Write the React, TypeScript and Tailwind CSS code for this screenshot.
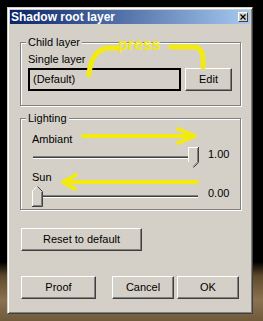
import React from 'react';

const btn =
  "flex items-center justify-center h-[23px] bg-[#d4d0c8] border border-t-white border-l-white border-r-[#404040] border-b-[#404040] shadow-[inset_-1px_-1px_0_#808080] text-[11px] leading-[13px] text-black";

function ThumbDown() {
  return (
    <svg width="11" height="21" viewBox="0 0 11 21" className="absolute right-0 top-[1px]">
      <polygon points="0,0 10,0 10,15 5,20 0,15" fill="#d4d0c8" />
      <polyline points="0.5,15 0.5,0.5 10,0.5" fill="none" stroke="#fff" />
      <polyline points="10.5,0 10.5,15.5 5.5,20.5" fill="none" stroke="#404040" />
      <polyline points="9.5,1 9.5,15 5,19.5" fill="none" stroke="#808080" />
    </svg>
  );
}

function ThumbUp() {
  return (
    <svg width="11" height="21" viewBox="0 0 11 21" className="absolute left-0 top-[1px]">
      <polygon points="0,5 5,0 10,5 10,20 0,20" fill="#d4d0c8" />
      <polyline points="0.5,20 0.5,5 5,0.5" fill="none" stroke="#fff" />
      <polyline points="5.5,0.5 10.5,5.5 10.5,20.5 0,20.5" fill="none" stroke="#404040" />
      <polyline points="9.5,6 9.5,19.5 1,19.5" fill="none" stroke="#808080" />
    </svg>
  );
}

function Slider({ value, atEnd }: { value: string; atEnd: boolean }) {
  return (
    <div className="flex items-center h-[22px]">
      <div className="relative w-[167px] h-full flex items-center">
        <div className="mx-[1px] w-full h-[3px] border-t border-b border-t-[#808080] border-b-white bg-[#404040]" />
        {atEnd ? <ThumbDown /> : <ThumbUp />}
      </div>
      <span className="ml-[9px] mb-[5px]">{value}</span>
    </div>
  );
}

export default function App() {
  return (
    <div className="relative w-[263px] h-[321px] overflow-hidden pt-[7px] pl-[7px] bg-[linear-gradient(to_bottom,#000_0px,#000_262px,#5e4a2c_276px,#8a7250_300px,#6f5a3a_321px)] font-['Liberation_Sans',Arial,sans-serif] text-[11px] leading-[13px] text-black">
      <div className="w-[246px] h-[307px] bg-[#d4d0c8] p-[2px] border border-t-[#d4d0c8] border-l-[#d4d0c8] border-r-[#404040] border-b-[#404040] shadow-[inset_1px_1px_0_#fff,inset_-1px_-1px_0_#808080] flex flex-col">
        {/* title bar */}
        <div className="h-[14px] flex items-center justify-between bg-[linear-gradient(to_right,#0a246a,#a6caf0)] pl-[1px]">
          <span className="text-white font-bold text-[12px] leading-[14px]">Shadow root layer</span>
          <div className="w-[10px] h-[10px] mr-[2px] bg-[#d4d0c8] border border-t-white border-l-white border-r-[#404040] border-b-[#404040] flex items-center justify-center">
            <svg width="6" height="6" viewBox="0 0 6 6">
              <path d="M0.5 0.5 L5.5 5.5 M5.5 0.5 L0.5 5.5" stroke="#000" strokeWidth="1.2" />
            </svg>
          </div>
        </div>

        <div className="flex flex-col">
          <fieldset className="ml-[10px] mt-[12px] w-[221px] border border-[#808080] shadow-[inset_1px_1px_0_#fff,1px_1px_0_#fff] pl-[7px] pr-[7px] pb-[14px]">
            <legend className="px-[2px] -ml-[2px] bg-[#d4d0c8] leading-[13px]">Child layer</legend>
            <div className="mt-[4px]">Single layer</div>
            <div className="mt-[2px] flex gap-[4px]">
              <div className="w-[153px] h-[23px] border-2 border-black bg-[#d4d0c8] flex items-center pl-[3px]">(Default)</div>
              <button type="button" className={`${btn} w-[47px]`}>Edit</button>
            </div>
          </fieldset>

          <fieldset className="ml-[10px] mt-[6px] w-[221px] border border-[#808080] shadow-[inset_1px_1px_0_#fff,1px_1px_0_#fff] pl-[11px] pr-[7px] pb-[2px]">
            <legend className="px-[2px] -ml-[6px] bg-[#d4d0c8] leading-[13px]">Lighting</legend>
            <div className="mt-[8px]">Ambiant</div>
            <Slider value="1.00" atEnd={true} />
            <div className="mt-[3px]">Sun</div>
            <div className="mt-[1px]">
              <Slider value="0.00" atEnd={false} />
            </div>
          </fieldset>

          <button type="button" className={`${btn} ml-[11px] mt-[18px] w-[121px]`}>Reset to default</button>

          <div className="ml-[11px] mt-[25px] flex">
            <button type="button" className={`${btn} w-[75px]`}>Proof</button>
            <button type="button" className={`${btn} w-[62px] ml-[16px]`}>Cancel</button>
            <button type="button" className={`${btn} w-[62px] ml-[3px]`}>OK</button>
          </div>
        </div>
      </div>

      {/* yellow annotations drawn over the dialog */}
      <svg className="absolute left-0 top-0 pointer-events-none" width="263" height="321" viewBox="0 0 263 321">
        <g fill="none" stroke="#f3ea12" strokeWidth="5" strokeLinecap="round" strokeLinejoin="round">
          <path d="M89 75 C 90 62, 94 50, 108 48 L 117 48" />
          <path d="M171 47 L 195 47 C 202 48, 204 55, 203 67" />
          <path d="M83 136 L 194 136 M 178 129 L 195 136 L 178 143" strokeWidth="4" />
          <path d="M197 182 L 64 182 M 76 175 L 63 182 L 75 189" strokeWidth="4" />
        </g>
      </svg>
      <span className="absolute left-[118px] top-[37px] text-[16px] leading-[16px] font-bold text-[#f3ea12]">press</span>
    </div>
  );
}
